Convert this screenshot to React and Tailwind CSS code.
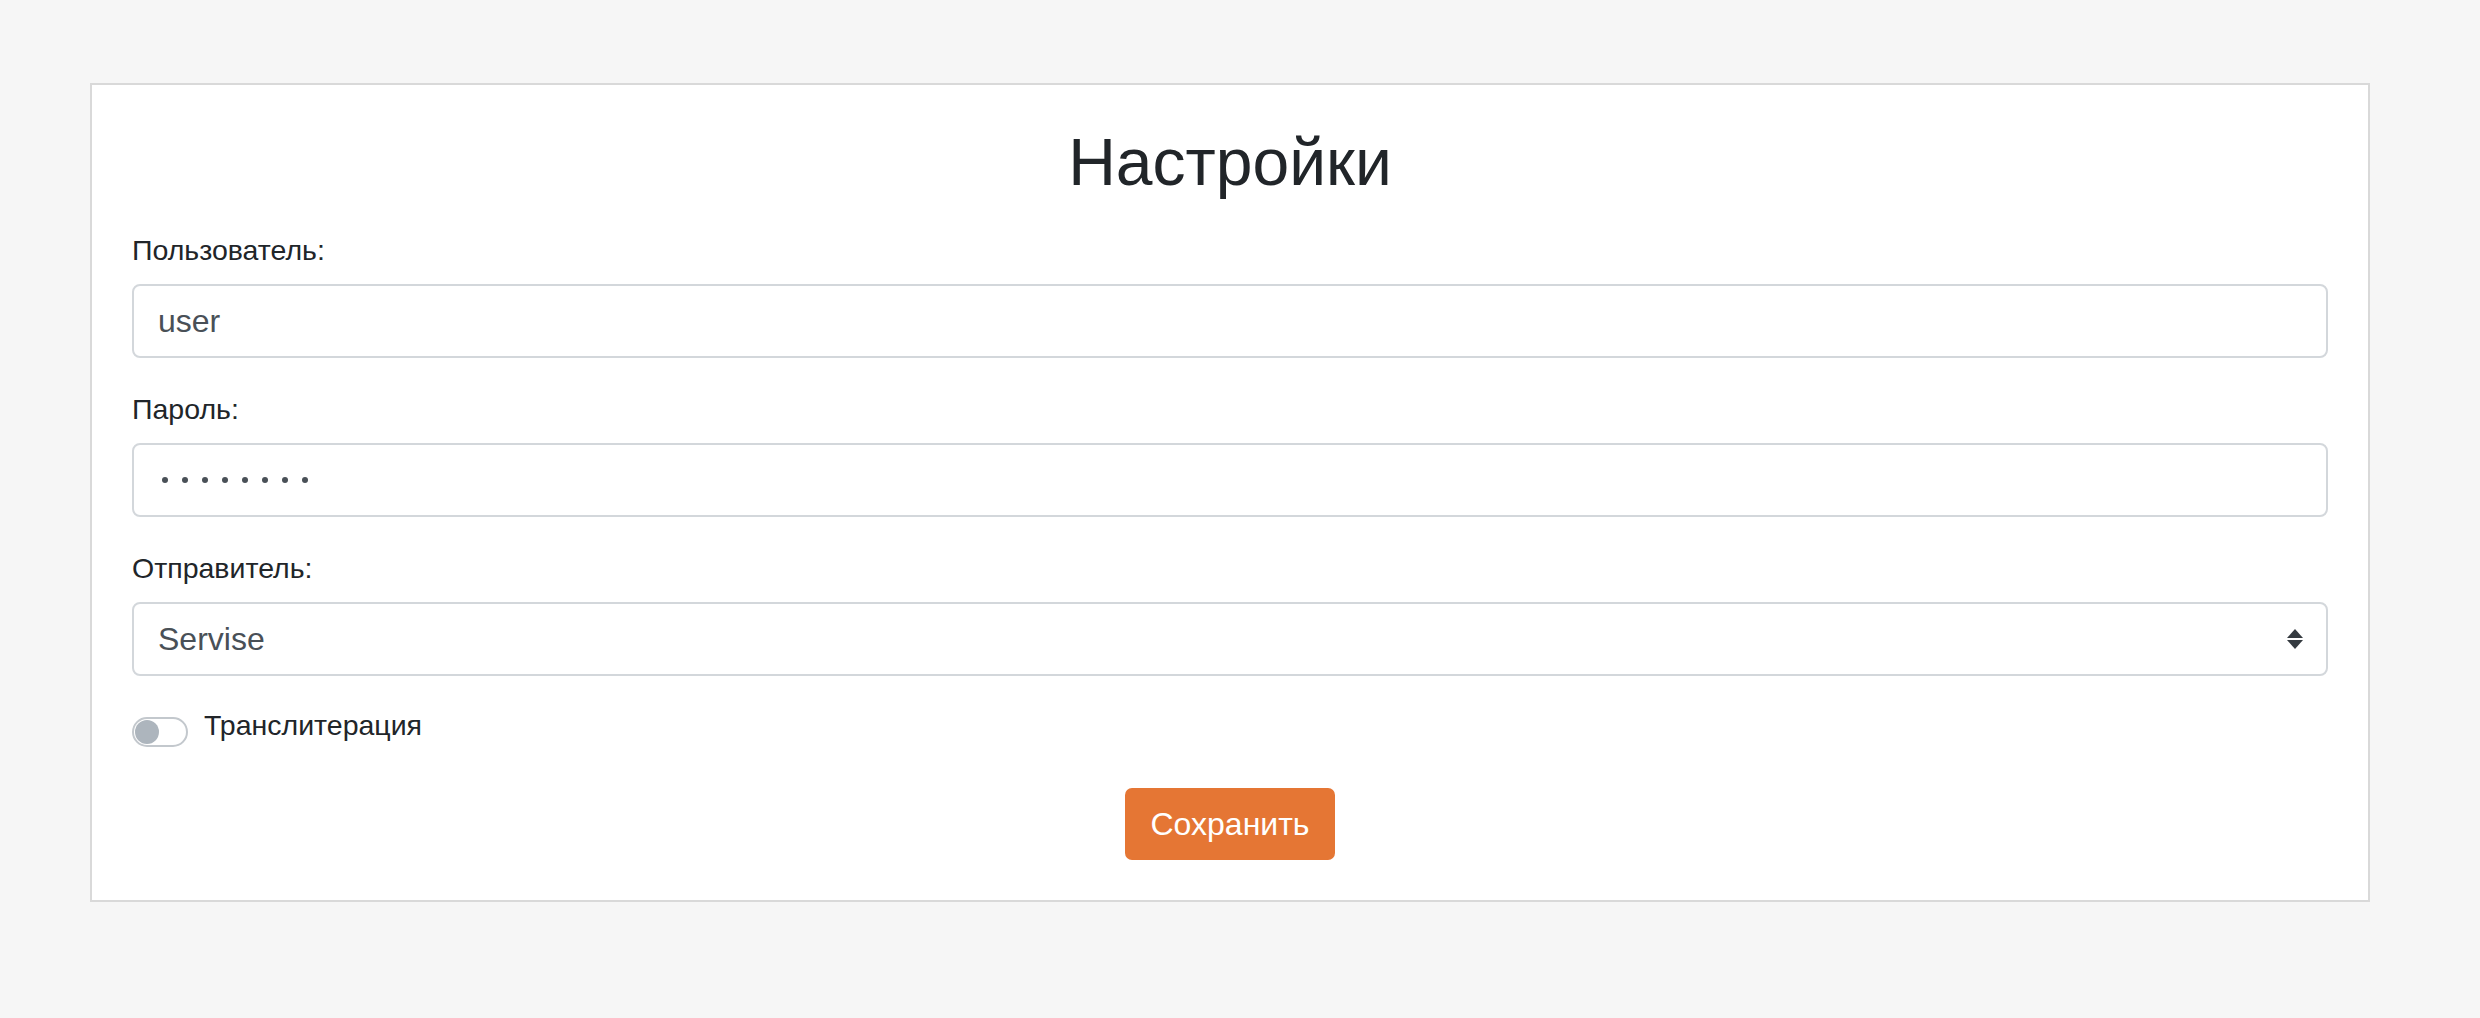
import { useState } from 'react'

function Label({ children, className = '' }) {
  return (
    <label className={`block text-[28.5px] leading-[34px] text-[#212529] ${className}`}>{children}</label>
  )
}

export default function App() {
  const [user, setUser] = useState('user')
  const [sender, setSender] = useState('Servise')
  const [translit, setTranslit] = useState(false)

  return (
    <div className="min-h-screen bg-[#f6f6f6] pt-[83px] pl-[90px] font-['Liberation_Sans',Arial,sans-serif]">
      <div className="w-[2280px] border-2 border-[#d9d9d9] bg-white px-[40px] pt-[39px] pb-[40px]">
        <h1 className="text-center text-[66px] leading-[76px] font-normal text-[#212529]">Настройки</h1>

        <Label className="mt-[33px]">Пользователь:</Label>
        <input
          value={user}
          onChange={(e) => setUser(e.target.value)}
          className="mt-[17px] block w-full h-[74px] rounded-[8px] border-2 border-[#d3d7db] px-[24px] text-[32px] text-[#495057] outline-none"
        />

        <Label className="mt-[34px]">Пароль:</Label>
        <div className="mt-[17px] flex h-[74px] w-full items-center gap-[14.5px] rounded-[8px] border-2 border-[#d3d7db] pl-[28px]">
          {Array.from({ length: 8 }).map((_, i) => (
            <span key={i} className="block h-[5.5px] w-[5.5px] rounded-full bg-[#495057]" />
          ))}
        </div>

        <Label className="mt-[34px]">Отправитель:</Label>
        <div className="relative mt-[17px]">
          <select
            value={sender}
            onChange={(e) => setSender(e.target.value)}
            className="block w-full h-[74px] appearance-none rounded-[8px] border-2 border-[#d3d7db] bg-white px-[24px] text-[32px] text-[#495057] outline-none"
          >
            <option>Servise</option>
          </select>
          <svg
            className="pointer-events-none absolute right-[25px] top-1/2 -translate-y-1/2"
            width="16"
            height="21"
            viewBox="0 0 16 21"
          >
            <path d="M0 9.5 L8 0.5 L16 9.5 Z" fill="#343a40" />
            <path d="M0 11.5 L16 11.5 L8 20.5 Z" fill="#343a40" />
          </svg>
        </div>

        <div className="mt-[32px] flex items-start">
          <button
            type="button"
            onClick={() => setTranslit(!translit)}
            className="mt-[9px] flex h-[30px] w-[56px] items-center rounded-full border-2 border-[#c3c8cd] bg-white px-[1px]"
          >
            <span className="block h-[24px] w-[24px] rounded-full bg-[#adb5bd]" />
          </button>
          <span className="ml-[16px] text-[28.5px] leading-[34px] text-[#212529]">Транслитерация</span>
        </div>

        <div className="mt-[41px] flex justify-center">
          <button
            type="button"
            className="h-[72px] w-[210px] rounded-[7px] bg-[#e57634] text-[32px] text-white"
          >
            Сохранить
          </button>
        </div>
      </div>
    </div>
  )
}
